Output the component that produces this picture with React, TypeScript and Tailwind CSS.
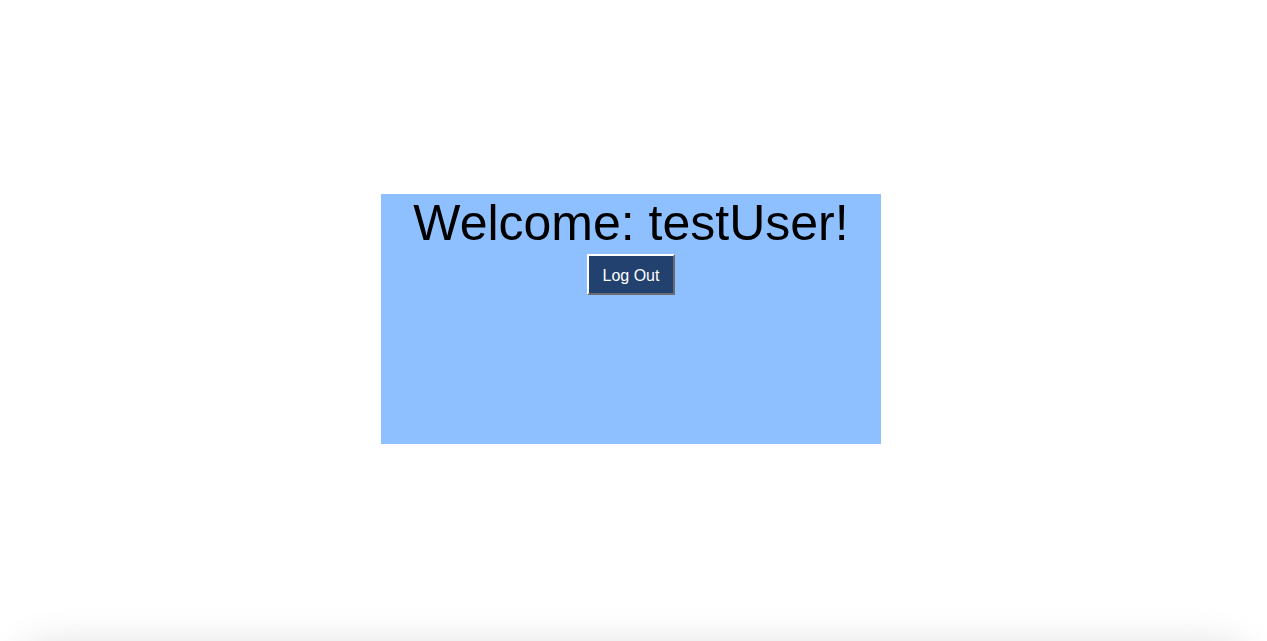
export default function App() {
  return (
    <div
      className="relative h-[641px] overflow-hidden bg-white flex items-center justify-center pr-[5px] pb-[3px]"
      style={{ fontFamily: '"Liberation Sans", Arial, sans-serif' }}
    >
      <div className="w-[500px] h-[250px] bg-[#8ec0ff] flex flex-col items-center">
        <h1 className="mt-px text-[50px] leading-[57px] text-black font-normal">Welcome: testUser!</h1>
        <button className="mt-[2px] w-[88px] h-[41px] pt-[2px] bg-[#22416f] text-white text-[16px] border-2 border-t-white border-l-white border-r-[#6b6b6b] border-b-[#6b6b6b]">
          Log Out
        </button>
      </div>

      {/* bottom window shadow */}
      <div className="absolute left-[30px] right-[30px] top-[660px] h-[40px] rounded-[30px] shadow-[0_0_40px_14px_rgba(0,0,0,0.14)]" />
    </div>
  );
}
